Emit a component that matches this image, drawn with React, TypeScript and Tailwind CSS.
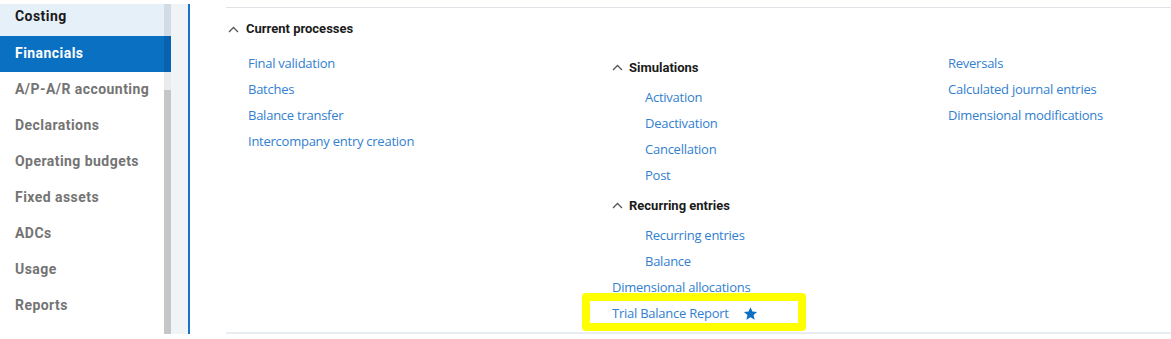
import React from "react";

const Chevron = () => (
  <svg width="11" height="7" viewBox="0 0 11 7" className="shrink-0">
    <polyline points="1,6 5.5,1.5 10,6" fill="none" stroke="#555" strokeWidth="1.3" />
  </svg>
);

const Star = () => (
  <svg width="15" height="15" viewBox="0 0 24 24" className="shrink-0">
    <path
      d="M12 1.8l3.1 6.9 7.4.7-5.6 5 1.7 7.4L12 17.9l-6.6 3.9 1.7-7.4-5.6-5 7.4-.7z"
      fill="#0b6fc4"
    />
  </svg>
);

const link = "block h-[26px] leading-[26px] text-[13px] tracking-[-0.25px] text-[#3280cf] whitespace-nowrap font-['Open_Sans',sans-serif]";
const head = "text-[13px] font-bold text-[#1b1b1b] whitespace-nowrap font-['Roboto',sans-serif]";

const SubHead = ({ label }: { label: string }) => (
  <div className="h-[34px] flex items-center gap-[6px] pt-[1px]">
    <Chevron />
    <span className={head}>{label}</span>
  </div>
);

const sideItems = [
  "A/P-A/R accounting",
  "Declarations",
  "Operating budgets",
  "Fixed assets",
  "ADCs",
  "Usage",
  "Reports",
];

const sideText = "leading-[20px] text-[14px] tracking-[0.45px] font-bold whitespace-nowrap";

export default function App() {
  return (
    <div className="w-[1171px] h-[339px] bg-white overflow-hidden flex font-['Roboto',sans-serif]">
      {/* Left navigation */}
      <div className="w-[190px] shrink-0 pt-[4px] pb-[5px] flex">
        <div className="w-[164px] flex flex-col">
          <div className="h-[32px] shrink-0 bg-[#e6f0f9] pl-[15px] pt-[2px]">
            <span className={`block ${sideText} text-[#1a1a1a]`}>Costing</span>
          </div>
          <div className="h-[36px] shrink-0 bg-[#0a70c2] pl-[15px] pb-[3px] flex items-center">
            <span className={`${sideText} text-white`}>Financials</span>
          </div>
          {sideItems.map((s) => (
            <div key={s} className="h-[36px] shrink-0 pl-[15px] pb-[3px] flex items-center">
              <span className={`${sideText} text-[#747474]`}>{s}</span>
            </div>
          ))}
        </div>
        <div className="w-[7px] flex flex-col">
          <div className="h-[32px] bg-[#d2dce6]" />
          <div className="h-[36px] bg-[#0862ad]" />
          <div className="h-[18px] bg-[#ebebeb]" />
          <div className="flex-1 bg-[#c6c6c6]" />
        </div>
        <div className="w-[17px] bg-[#f0f4f7]" />
        <div className="w-[2px] bg-[#1a73c7]" />
      </div>

      {/* Main */}
      <div className="flex-1 pl-[36px] pt-[7px]">
        <div className="h-[327px] border-t border-[#dfe3e7] border-b-2 border-b-[#e8edf2] flex flex-col">
          <div className="h-[42px] flex items-center gap-[7px] pl-[2px]">
            <Chevron />
            <span className={head}>Current processes</span>
          </div>
          <div className="flex pl-[22px]">
            <div className="w-[364px]">
              <span className={link}>Final validation</span>
              <span className={link}>Batches</span>
              <span className={link}>Balance transfer</span>
              <span className={link}>Intercompany entry creation</span>
            </div>
            <div className="w-[336px]">
              <SubHead label="Simulations" />
              <div className="pl-[33px]">
                <span className={link}>Activation</span>
                <span className={link}>Deactivation</span>
                <span className={link}>Cancellation</span>
                <span className={link}>Post</span>
              </div>
              <SubHead label="Recurring entries" />
              <div className="pl-[33px]">
                <span className={link}>Recurring entries</span>
                <span className={link}>Balance</span>
              </div>
              <span className={link}>Dimensional allocations</span>
              <div className="relative flex items-center h-[26px] gap-[14px]">
                <span className={link}>Trial Balance Report</span>
                <Star />
                <div className="absolute left-[-30px] top-[-7px] w-[224px] h-[38px] border-[8px] border-[#ffff00] rounded-[4px]" />
              </div>
            </div>
            <div>
              <span className={link}>Reversals</span>
              <span className={link}>Calculated journal entries</span>
              <span className={link}>Dimensional modifications</span>
            </div>
          </div>
        </div>
      </div>
    </div>
  );
}
